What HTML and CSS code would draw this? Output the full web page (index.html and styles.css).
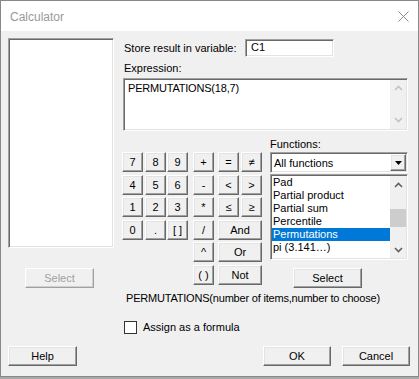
FILE: index.html
```html
<!DOCTYPE html>
<html>
<head>
<meta charset="utf-8">
<link rel="stylesheet" href="styles.css">
</head>
<body>
<div class="window">
  <div class="titlebar">
    <span class="title">Calculator</span>
    <svg class="close" width="11" height="11" viewBox="0 0 11 11"><path d="M0.5 0.5 L10.5 10.5 M10.5 0.5 L0.5 10.5" stroke="#8a8a8a" stroke-width="1" fill="none"/></svg>
  </div>
  <div class="content">
    <div class="main">
      <div class="left">
        <div class="varlist sunken"></div>
        <button class="btn btn-select-left" disabled>Select</button>
      </div>
      <div class="right">
        <div class="store-row">
          <span class="store-label">Store result in variable:</span>
          <div class="input sunken">C1</div>
        </div>
        <div class="expr-label">Expression:</div>
        <div class="textarea sunken">
          <div class="expr-text">PERMUTATIONS(18,7)</div>
          <div class="vscroll vscroll-disabled">
            <svg width="9" height="6" viewBox="0 0 9 6"><path d="M1 5 L4.5 1.5 L8 5" stroke="#c2c2c2" stroke-width="1.6" fill="none"/></svg>
            <svg width="9" height="6" viewBox="0 0 9 6"><path d="M1 1 L4.5 4.5 L8 1" stroke="#c2c2c2" stroke-width="1.6" fill="none"/></svg>
          </div>
        </div>
        <div class="lower">
          <div class="keypad">
            <button class="btn key">7</button>
            <button class="btn key">8</button>
            <button class="btn key">9</button>
            <button class="btn key">+</button>
            <button class="btn key">=</button>
            <button class="btn key">≠</button>
            <button class="btn key">4</button>
            <button class="btn key">5</button>
            <button class="btn key">6</button>
            <button class="btn key">-</button>
            <button class="btn key">&lt;</button>
            <button class="btn key">&gt;</button>
            <button class="btn key">1</button>
            <button class="btn key">2</button>
            <button class="btn key">3</button>
            <button class="btn key">*</button>
            <button class="btn key">≤</button>
            <button class="btn key">≥</button>
            <button class="btn key">0</button>
            <button class="btn key">.</button>
            <button class="btn key">[ ]</button>
            <button class="btn key">/</button>
            <button class="btn key wide">And</button>
            <button class="btn key col4">^</button>
            <button class="btn key wide">Or</button>
            <button class="btn key col4">( )</button>
            <button class="btn key wide">Not</button>
          </div>
          <div class="functions">
            <div class="func-label">Functions:</div>
            <div class="dropdown sunken">
              <span class="dropdown-text">All functions</span>
              <span class="dropdown-btn">
                <svg width="7" height="4" viewBox="0 0 7 4"><path d="M0 0 H7 L3.5 4 Z" fill="#000"/></svg>
              </span>
            </div>
            <div class="funclist sunken">
              <ul class="items">
                <li>Pad</li>
                <li>Partial product</li>
                <li>Partial sum</li>
                <li>Percentile</li>
                <li class="selected">Permutations</li>
                <li>pi (3.141…)</li>
              </ul>
              <div class="vscroll">
                <span class="arrow">
                  <svg width="9" height="6" viewBox="0 0 9 6"><path d="M1 5 L4.5 1.5 L8 5" stroke="#606060" stroke-width="1.6" fill="none"/></svg>
                </span>
                <span class="thumb"></span>
                <span class="arrow arrow-down">
                  <svg width="9" height="6" viewBox="0 0 9 6"><path d="M1 1 L4.5 4.5 L8 1" stroke="#606060" stroke-width="1.6" fill="none"/></svg>
                </span>
              </div>
            </div>
            <button class="btn btn-select-right">Select</button>
          </div>
        </div>
        <div class="hint">PERMUTATIONS(number of items,number to choose)</div>
        <label class="check-row"><span class="checkbox"></span><span>Assign as a formula</span></label>
      </div>
    </div>
    <div class="footer">
      <button class="btn footer-btn">Help</button>
      <button class="btn footer-btn ok">OK</button>
      <button class="btn footer-btn">Cancel</button>
    </div>
  </div>
</div>
</body>
</html>
```

FILE: styles.css
```css
* { box-sizing: border-box; }

html, body {
  margin: 0;
  padding: 0;
  background: #a8a8a8;
  font-family: "Liberation Sans", Arial, sans-serif;
  font-size: 11px;
  color: #000;
}

.window {
  width: 419px;
  height: 377px;
  border: 1px solid #888;
  background: #f0f0f0;
  display: flex;
  flex-direction: column;
}

.titlebar {
  height: 30px;
  background: #fff;
  display: flex;
  align-items: center;
  padding-left: 9px;
  padding-right: 9px;
  flex-shrink: 0;
}

.title {
  font-size: 12px;
  color: #999;
  flex: 1;
  padding-top: 1px;
}

.close { display: block; margin-top: 0; }

.content {
  flex: 1;
  padding: 7px 8px 0 7px;
  display: flex;
  flex-direction: column;
}

.main { display: flex; }

.sunken {
  border: 1px solid;
  border-color: #a0a0a0 #fff #fff #a0a0a0;
  box-shadow: inset 1px 1px 0 #696969, inset -1px -1px 0 #e3e3e3;
  background: #fff;
}

.btn {
  font-family: inherit;
  font-size: 11px;
  color: #000;
  background: #f0f0f0;
  border: 1px solid;
  border-color: #fff #696969 #696969 #fff;
  box-shadow: inset -1px -1px 0 #a0a0a0, inset 1px 1px 0 #e3e3e3;
  padding: 0;
  margin: 0;
  height: 20px;
  line-height: 16px;
  text-align: center;
}

.btn:disabled {
  color: #a0a0a0;
  border-color: #fff #a0a0a0 #a0a0a0 #fff;
  box-shadow: inset -1px -1px 0 #d0d0d0;
}

/* left column */
.left {
  width: 106px;
  display: flex;
  flex-direction: column;
  flex-shrink: 0;
}

.varlist { height: 210px; }

.btn-select-left {
  margin-top: 20px;
  margin-left: 17px;
  width: 69px;
}

/* right column */
.right {
  margin-left: 9px;
  width: 285px;
  display: flex;
  flex-direction: column;
}

.store-row {
  margin-top: 1px;
  height: 18px;
  display: flex;
  align-items: center;
}

.store-label {
  width: 122px;
  padding-left: 1px;
}

.input {
  width: 89px;
  height: 18px;
  line-height: 15px;
  padding-left: 5px;
  font-size: 11px;
}

.expr-label {
  margin-top: 4px;
  height: 14px;
  line-height: 14px;
  padding-left: 1px;
}

.textarea {
  margin-top: 3px;
  height: 53px;
  display: flex;
}

.expr-text {
  flex: 1;
  padding: 2px 0 0 4px;
  line-height: 14px;
  letter-spacing: -0.2px;
}

.vscroll {
  width: 16px;
  background: #f0f0f0;
  display: flex;
  flex-direction: column;
  align-items: center;
  margin: 1px 1px 1px 0;
}

.vscroll-disabled {
  justify-content: space-between;
  padding: 5px 0 6px;
}

.vscroll svg { display: block; }

/* keypad */
.lower {
  margin-top: 6px;
  display: flex;
}

.keypad {
  margin-top: 15px;
  margin-left: -1px;
  display: grid;
  grid-template-columns: 23px 22px 26px 25px 23px 21px;
  grid-template-rows: 23px 22px 23px 22px 23px 20px;
  align-items: start;
  height: 133px;
}

.key { width: 21px; }

.key.col4 { grid-column: 4; }

.key.wide {
  grid-column: 5 / span 2;
  width: 44px;
}

/* functions */
.functions {
  margin-left: 8px;
  width: 138px;
  display: flex;
  flex-direction: column;
}

.func-label {
  height: 14px;
  line-height: 14px;
}

.dropdown {
  margin-top: 1px;
  height: 21px;
  display: flex;
  align-items: center;
  padding: 1px 1px 1px 3px;
}

.dropdown-text { flex: 1; }

.dropdown-btn {
  width: 16px;
  height: 17px;
  background: #f0f0f0;
  border: 1px solid;
  border-color: #fff #696969 #696969 #fff;
  box-shadow: inset -1px -1px 0 #a0a0a0, inset 1px 1px 0 #e3e3e3;
  display: flex;
  align-items: center;
  justify-content: center;
}

.dropdown-btn svg { display: block; }

.funclist {
  margin-top: 1px;
  height: 86px;
  display: flex;
  padding: 1px;
}

.items {
  list-style: none;
  margin: 0;
  padding: 0;
  flex: 1;
  overflow: hidden;
}

.items li {
  height: 13px;
  line-height: 13px;
  padding-left: 1px;
  white-space: nowrap;
}

.items li.selected {
  background: #0078d7;
  color: #fff;
}

.funclist .vscroll {
  margin: 0;
  justify-content: flex-start;
}

.arrow {
  height: 17px;
  width: 16px;
  display: flex;
  align-items: center;
  justify-content: center;
}

.thumb {
  margin-top: 16px;
  width: 16px;
  height: 18px;
  background: #cdcdcd;
}

.arrow-down { margin-top: auto; }

.btn-select-right {
  margin-top: 8px;
  margin-left: 23px;
  width: 69px;
}

.hint {
  margin-top: 3px;
  height: 14px;
  line-height: 14px;
  padding-left: 3px;
  white-space: nowrap;
  letter-spacing: -0.2px;
}

.check-row {
  margin-top: 15px;
  height: 14px;
  display: flex;
  align-items: center;
  padding-left: 1px;
}

.checkbox {
  width: 13px;
  height: 13px;
  border: 1px solid #333;
  background: #fff;
  margin-right: 6px;
}

/* footer */
.footer {
  margin-top: 12px;
  display: flex;
}

.footer-btn { width: 69px; }

.footer-btn.ok { margin-left: auto; margin-right: 11px; width: 68px; }
.footer-btn:last-child { width: 68px; }
```
